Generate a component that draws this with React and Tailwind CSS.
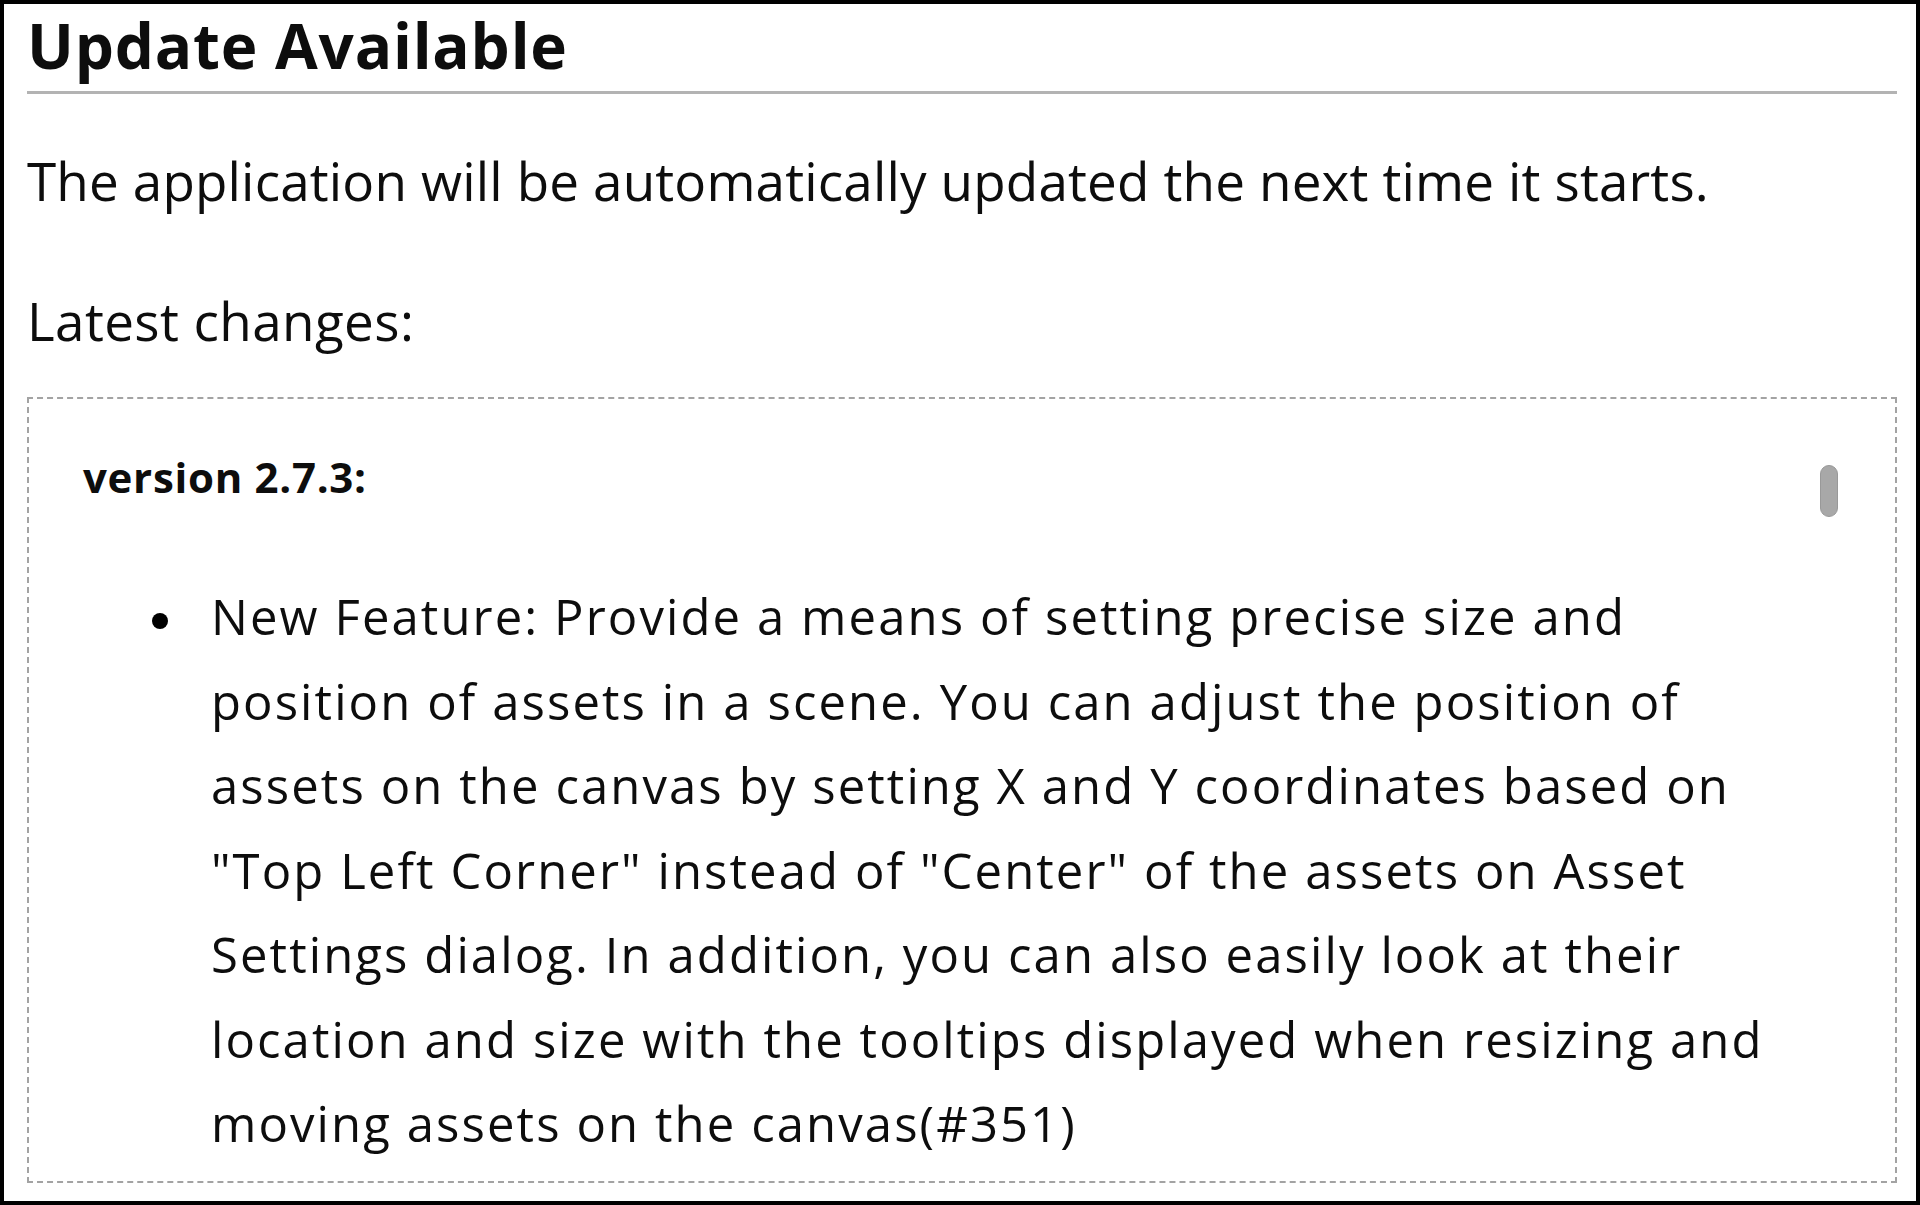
import React from "react";

const lines = [
  "New Feature: Provide a means of setting precise size and",
  "position of assets in a scene. You can adjust the position of",
  "assets on the canvas by setting X and Y coordinates based on",
  "\"Top Left Corner\" instead of \"Center\" of the assets on Asset",
  "Settings dialog. In addition, you can also easily look at their",
  "location and size with the tooltips displayed when resizing and",
  "moving assets on the canvas(#351)",
];

export default function App() {
  return (
    <div
      className="w-[1920px] h-[1205px] border-4 border-black bg-white text-[#0d0d0d] overflow-hidden pl-[23px] pr-[19px]"
      style={{ fontFamily: '"Open Sans", "Noto Sans", sans-serif' }}
    >
      <h1 className="pt-[5px] text-[62px] leading-[72px] font-bold tracking-[0.8px]">Update Available</h1>
      <div className="mt-[10px] h-[3px] bg-[#b3b3b3]" />
      <p className="mt-[55px] text-[53px] leading-[64px] tracking-[0.15px]">
        The application will be automatically updated the next time it starts.
      </p>
      <p className="mt-[76px] text-[53px] leading-[64px] tracking-[0.4px]">Latest changes:</p>
      <div className="relative mt-[44px] h-[786px] border-2 border-dashed border-[#a3a3a3] overflow-hidden">
        <div className="pt-[53px] pl-[54px] text-[42px] leading-[50px] font-bold tracking-[0.7px]">version 2.7.3:</div>
        <ul className="mt-[72px] flex pl-[123px]">
          <li className="flex">
            <span className="mt-[39px] w-[16px] h-[16px] rounded-full bg-black shrink-0" />
            <div className="ml-[43px] text-[49px] leading-[84.5px] tracking-[2.1px]">
              {lines.map((l, i) => (
                <span key={i} className="block whitespace-nowrap">{l}</span>
              ))}
            </div>
          </li>
        </ul>
        <div className="absolute left-[1791px] top-[66px] w-[18px] h-[52px] rounded-full bg-[#a8a8a8] border border-[#999]" />
      </div>
    </div>
  );
}
